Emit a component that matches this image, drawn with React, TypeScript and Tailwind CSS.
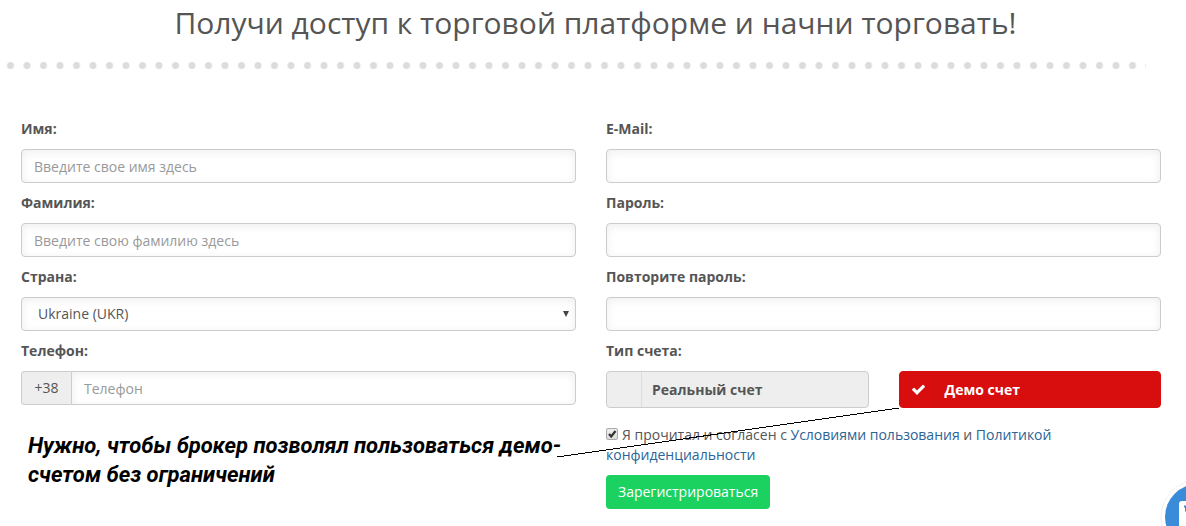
import { useState } from "react";

const inputClass =
    "h-[34px] w-full min-w-0 rounded border border-[#ccc] bg-white px-3 text-sm text-[#555] shadow-[inset_0_2px_10px_rgba(0,0,0,0.07)] placeholder:text-[#999] placeholder:opacity-100";

type FieldProps = {
    id: string;
    label: string;
    type?: string;
    placeholder?: string;
};

function Label({ htmlFor, children }: { htmlFor: string; children: string }) {
    return (
        <label htmlFor={htmlFor} className="mb-[10px] block text-sm leading-5 font-bold">
            {children}
        </label>
    );
}

function Field({ id, label, type = "text", placeholder }: FieldProps) {
    return (
        <div className="mb-[10px]">
            <Label htmlFor={id}>{label}</Label>
            <input id={id} type={type} placeholder={placeholder} className={`${inputClass} block`} />
        </div>
    );
}

function Dots() {
    return (
        <svg className="mt-[18px] ml-[2px] block h-2 w-[calc(100%-42px)]" aria-hidden="true">
            <defs>
                <pattern id="dots" width="16.5" height="8" patternUnits="userSpaceOnUse">
                    <circle cx="8.5" cy="4.5" r="3.5" fill="#dcdcdc" />
                </pattern>
            </defs>
            <rect width="100%" height="8" fill="url(#dots)" />
        </svg>
    );
}

function CheckIcon() {
    return (
        <svg className="h-[15px] w-[15px]" viewBox="0 0 1792 1792" fill="currentColor" aria-hidden="true">
            <path d="M1671 566q0 40-28 68l-724 724-136 136q-28 28-68 28t-68-28l-136-136-362-362q-28-28-28-68t28-68l136-136q28-28 68-28t68 28l294 295 656-657q28-28 68-28t68 28l136 136q28 28 28 68z" />
        </svg>
    );
}

export default function App() {
    const [account, setAccount] = useState("demo");
    const [agreed, setAgreed] = useState(true);

    const accounts = [
        { value: "real", label: "Реальный счет" },
        { value: "demo", label: "Демо счет" },
    ];

    return (
        <main className="overflow-x-clip bg-white pb-4 font-['Open_Sans',sans-serif] text-sm leading-5 text-[#555]">
            <h1 className="pt-[3px] pl-[5px] text-center text-[30px] leading-10">
                Получи доступ к торговой платформе и начни торговать!
            </h1>
            <Dots />

            <form
                onSubmit={(e) => e.preventDefault()}
                className="mt-[50px] grid grid-cols-2 gap-[30px] pr-[25px] pl-[21px]"
            >
                <div>
                    <Field id="name" label="Имя:" placeholder="Введите свое имя здесь" />
                    <Field id="surname" label="Фамилия:" placeholder="Введите свою фамилию здесь" />

                    <div className="mb-[10px]">
                        <Label htmlFor="country">Страна:</Label>
                        <div className="relative">
                            <select id="country" className={`${inputClass} block appearance-none pl-4`}>
                                <option>Ukraine (UKR)</option>
                            </select>
                            <svg
                                className="pointer-events-none absolute top-[14px] right-[7px] h-[6px] w-[6px]"
                                viewBox="0 0 6 6"
                                aria-hidden="true"
                            >
                                <path d="M0 0h6L3 6z" fill="#444" />
                            </svg>
                        </div>
                    </div>

                    <Label htmlFor="phone">Телефон:</Label>
                    <div className="flex">
                        <span className="flex h-[34px] w-[50px] shrink-0 items-center justify-center rounded-l border border-r-0 border-[#ccc] bg-[#eee]">
                            +38
                        </span>
                        <input
                            id="phone"
                            type="tel"
                            placeholder="Телефон"
                            className={`${inputClass} rounded-l-none`}
                        />
                    </div>

                    <p className="mt-[26px] pl-[7px] font-['Roboto','Arial_Narrow',sans-serif] text-[22px] leading-[29px] font-bold text-black italic">
                        Нужно, чтобы брокер позволял пользоваться демо-
                        <br />
                        счетом без ограничений
                    </p>
                </div>

                <div>
                    <Field id="email" label="E-Mail:" type="email" />
                    <Field id="password" label="Пароль:" type="password" />
                    <Field id="password2" label="Повторите пароль:" type="password" />

                    <div className="mb-[10px] font-bold" id="account-label">
                        Тип счета:
                    </div>
                    <div className="relative">
                        <div role="radiogroup" aria-labelledby="account-label" className="grid grid-cols-2 gap-[30px]">
                            {accounts.map((item) => {
                                const active = account === item.value;
                                return (
                                    <label
                                        key={item.value}
                                        className={`flex h-[37px] cursor-pointer items-stretch rounded border font-bold ${
                                            active
                                                ? "border-[#d80e0e] bg-[#d80e0e] text-white"
                                                : "border-[#ccc] bg-[#eee]"
                                        }`}
                                    >
                                        <input
                                            type="radio"
                                            name="account"
                                            value={item.value}
                                            checked={active}
                                            onChange={() => setAccount(item.value)}
                                            className="sr-only"
                                        />
                                        <span
                                            className={`flex w-[35px] items-center justify-center border-r pl-1 ${
                                                active ? "border-[#d01010]" : "border-[#ddd]"
                                            }`}
                                        >
                                            {active && <CheckIcon />}
                                        </span>
                                        <span className="flex items-center pl-[10px]">{item.label}</span>
                                    </label>
                                );
                            })}
                        </div>

                        {/* Callout line from the note to the demo account */}
                        <svg
                            className="pointer-events-none absolute top-[37px] left-[-49px] h-[50px] w-[343px]"
                            viewBox="0 0 343 50"
                            shapeRendering="crispEdges"
                            aria-hidden="true"
                        >
                            <path d="M0 49L342 0" stroke="#000" fill="none" />
                        </svg>
                    </div>

                    <div className="mt-[17px] max-w-[480px]">
                        <span className="relative mr-1 inline-block h-3 w-3">
                            <input
                                id="agree"
                                type="checkbox"
                                checked={agreed}
                                onChange={(e) => setAgreed(e.target.checked)}
                                className="block h-3 w-3 appearance-none rounded-[2px] border border-[#aaa] bg-linear-to-b from-[#eee] to-[#ddd]"
                            />
                            {agreed && (
                                <svg
                                    className="pointer-events-none absolute inset-0 h-3 w-3"
                                    viewBox="0 0 12 12"
                                    aria-hidden="true"
                                >
                                    <path d="M3 6l2.2 2.5L9.5 3" fill="none" stroke="#333" strokeWidth="2.2" />
                                </svg>
                            )}
                        </span>
                        <label htmlFor="agree">Я прочитал и согласен с </label>
                        <a href="#terms" className="text-[#2a6496]">Условиями пользования</a> и{" "}
                        <a href="#privacy" className="text-[#2a6496]">Политикой конфиденциальности</a>
                    </div>

                    <button
                        type="submit"
                        className="mt-[10px] h-[34px] rounded bg-[#1bd160] px-3 text-sm text-white"
                    >
                        Зарегистрироваться
                    </button>
                </div>
            </form>

            {/* Chat button, partly off screen */}
            <button
                type="button"
                aria-label="Чат"
                className="fixed right-[-50px] bottom-[-29px] h-[76px] w-[76px] rounded-full"
            >
                <svg viewBox="0 0 76 76" className="h-full w-full">
                    <circle cx="38" cy="38" r="37" fill="#fff" stroke="#f0f0f0" />
                    <circle cx="38" cy="38" r="33" fill="#3a8bd8" />
                    <rect x="19" y="22" width="38" height="36" rx="3" fill="#fff" />
                    <path d="M24 27.5h28M26 27.5v5" fill="none" stroke="#3a8bd8" strokeWidth="2" />
                </svg>
            </button>
        </main>
    );
}
